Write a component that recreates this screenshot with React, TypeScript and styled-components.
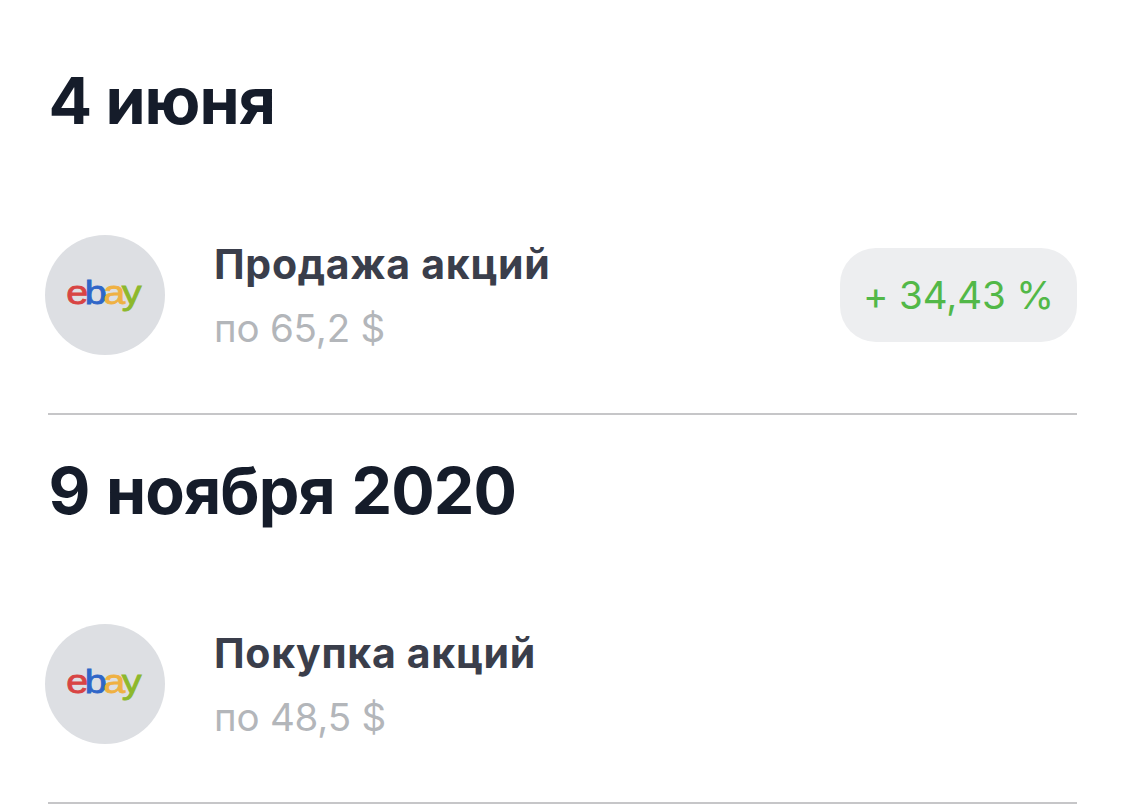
import React from 'react';
import styled, { createGlobalStyle } from 'styled-components';

const GlobalStyle = createGlobalStyle`
  * { box-sizing: border-box; }
  body { margin: 0; background: #fff; font-family: Inter, sans-serif; overflow: hidden; }
`;

const Page = styled.main`
  width: 1125px;
  height: 807px;
  padding: 25px 48px 0;
  overflow: hidden;
`;
const Day = styled.section`
  height: 389.5px;
  border-bottom: 2px solid #c6c6c8;
`;
const DayTitle = styled.h2<{ $tracking: number; $gap: number }>`
  margin: 0;
  padding: 36px 0 0 0.5px;
  height: 209.5px;
  font-size: 64.5px;
  line-height: 80px;
  font-weight: 700;
  letter-spacing: ${(p) => p.$tracking}px;
  word-spacing: ${(p) => p.$gap}px;
  color: #151c2a;
`;
const Deal = styled.article`
  display: flex;
  align-items: center;
  height: 120px;
  margin-left: -3px;
`;
const Avatar = styled.div`
  width: 120px;
  height: 120px;
  border-radius: 50%;
  background: #dddfe3;
`;
const Details = styled.div`
  flex: 1;
  margin-left: 49px;
  padding-top: 6px;
`;
const DealName = styled.div`
  font-size: 41px;
  line-height: 58px;
  font-weight: 700;
  letter-spacing: 0.7px;
  color: #3a3e4b;
`;
const Price = styled.div`
  margin-top: 2px;
  font-size: 38.5px;
  line-height: 66px;
  letter-spacing: -0.2px;
  color: #b3b6ba;
`;
const Profit = styled.div`
  display: flex;
  align-items: center;
  justify-content: center;
  width: 237px;
  height: 94px;
  padding-top: 1px;
  border-radius: 36px;
  background: #edeef0;
  font-size: 38.5px;
  letter-spacing: -0.1px;
  color: #52b848;
`;
const Logo = styled.svg`
  display: block;
  width: 120px;
  height: 120px;
  font-family: "Liberation Sans", sans-serif;
  font-size: 33px;
  letter-spacing: -2.9px;
`;

const letters = [
  { char: 'e', color: '#d84444' },
  { char: 'b', color: '#2f66c8' },
  { char: 'a', color: '#efb142' },
  { char: 'y', color: '#8db82c' },
];

const Ebay = () => (
  <Logo viewBox="0 0 120 120">
    <text transform="translate(21.2 69) scale(1.2 1)" strokeWidth="0.8">
      {letters.map((l) => (
        <tspan key={l.char} fill={l.color} stroke={l.color}>{l.char}</tspan>
      ))}
    </text>
  </Logo>
);

const days = [
  { date: '4 июня', tracking: -1, gap: 0, name: 'Продажа акций', price: 'по 65,2 $', profit: '+ 34,43 %' },
  { date: '9 ноября 2020', tracking: -0.9, gap: 2.2, name: 'Покупка акций', price: 'по 48,5 $', profit: '' },
];

export default function App() {
  return (
    <Page>
      <GlobalStyle />
      {days.map((d) => (
        <Day key={d.date}>
          <DayTitle $tracking={d.tracking} $gap={d.gap}>{d.date}</DayTitle>
          <Deal>
            <Avatar><Ebay /></Avatar>
            <Details>
              <DealName>{d.name}</DealName>
              <Price>{d.price}</Price>
            </Details>
            {d.profit && <Profit>{d.profit}</Profit>}
          </Deal>
        </Day>
      ))}
    </Page>
  );
}
